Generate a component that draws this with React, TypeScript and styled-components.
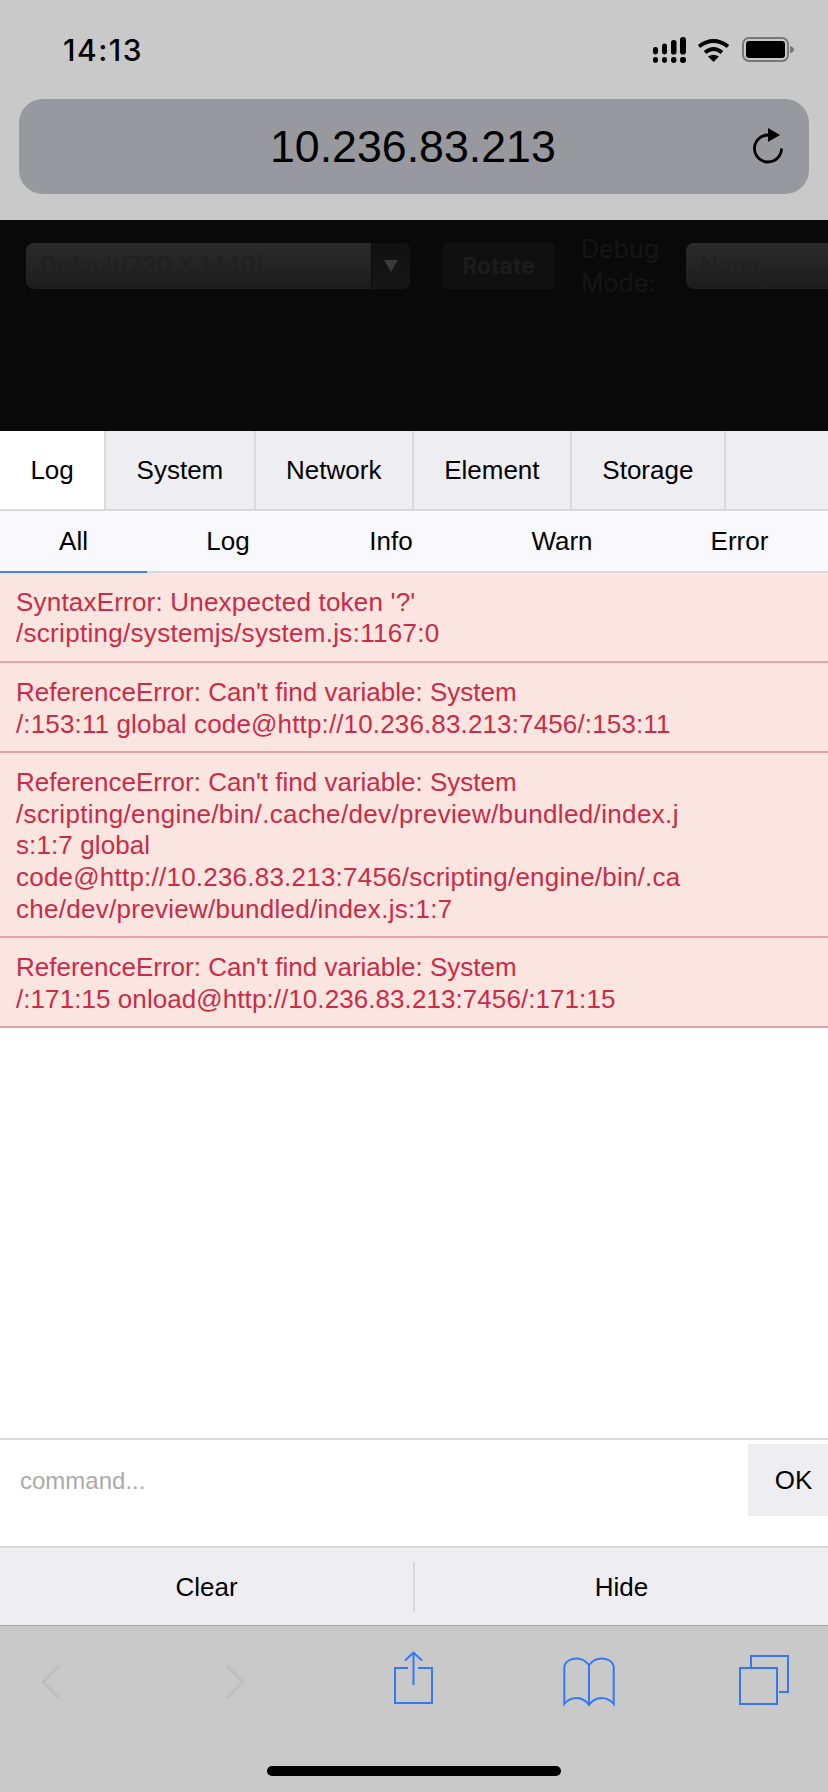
import React from 'react';
import styled, { createGlobalStyle } from 'styled-components';

const GlobalStyle = createGlobalStyle`
  html, body {
    margin: 0;
    padding: 0;
    background: #c9c9c9;
  }
  * {
    box-sizing: border-box;
  }
`;

const Page = styled.div`
  width: 828px;
  height: 1792px;
  display: flex;
  flex-direction: column;
  overflow: hidden;
  font-family: 'Liberation Sans', Arial, sans-serif;
  font-size: 26px;
  color: #000;
  background: #fff;
`;

const BrowserTop = styled.header`
  height: 220px;
  flex: none;
  background: #c9c9c9;
  padding: 0 19px;
`;

const StatusBar = styled.div`
  height: 99px;
  display: flex;
  align-items: center;
  padding: 0 15px 0 44px;
`;

const Clock = styled.span`
  font-family: Inter, 'Liberation Sans', sans-serif;
  font-size: 30px;
  font-weight: 500;
  margin-right: auto;
  letter-spacing: 1.5px;
`;

const StatusIcon = styled.svg<{ $gap?: number }>`
  display: block;
  flex: none;
  margin-left: ${(p) => p.$gap ?? 0}px;
`;

const UrlBar = styled.div`
  height: 95px;
  border-radius: 24px;
  background: #98999e;
  display: flex;
  align-items: center;
  padding: 0 26px 0 251px;
`;

const UrlText = styled.span`
  font-size: 44.7px;
  margin-right: auto;
`;

const ReloadIcon = styled.svg`
  display: block;
  flex: none;
  margin-top: -2px;
`;

const DimmedPage = styled.section`
  height: 211px;
  flex: none;
  background: #090909;
  display: flex;
  align-items: center;
  padding: 0 0 119px 26px;
  overflow: hidden;
  font-family: Inter, 'Liberation Sans', sans-serif;
`;

const DimSelect = styled.div<{ $width: number; $gap?: number }>`
  width: ${(p) => p.$width}px;
  height: 46px;
  flex: none;
  margin-left: ${(p) => p.$gap ?? 0}px;
  display: flex;
  border-radius: 8px;
  overflow: hidden;
  background: linear-gradient(#2b2b2b, #1c1c1c);
`;

const DimSelectText = styled.span`
  flex: 1;
  font-size: 23.6px;
  line-height: 46px;
  padding-left: 14px;
  white-space: nowrap;
  color: #202020;
`;

const DimSelectArrow = styled.span`
  width: 39px;
  flex: none;
  display: flex;
  align-items: center;
  justify-content: center;
  background: linear-gradient(#111, #161616);
  border-left: 1px solid #0b0b0b;
  &::after {
    content: '';
    width: 0;
    height: 0;
    border-left: 7px solid transparent;
    border-right: 7px solid transparent;
    border-top: 12px solid #3a3a3a;
  }
`;

const DimButton = styled.div`
  width: 111px;
  height: 46px;
  flex: none;
  margin-left: 33px;
  background: #101010;
  border-radius: 2px;
  font-size: 23px;
  font-weight: 700;
  line-height: 46px;
  text-align: center;
  color: #1c1c1c;
`;

const DimLabel = styled.div`
  width: 78px;
  flex: none;
  margin-left: 27px;
  font-size: 25px;
  line-height: 34px;
  color: #151515;
`;

const TabBar = styled.nav`
  height: 80px;
  flex: none;
  display: flex;
  background: #eeeef2;
  border-bottom: 2px solid #d9d9d9;
`;

const Tab = styled.div<{ $active?: boolean }>`
  padding: 0 30.4px;
  line-height: 78px;
  border-right: 2px solid #d9d9d9;
  background: ${(p) => (p.$active ? '#fff' : 'transparent')};
`;

const FilterBar = styled.nav`
  height: 62px;
  flex: none;
  display: flex;
  background: #f8f8fd;
  border-bottom: 2px solid #d9d9d9;
`;

const Filter = styled.div<{ $width: number; $active?: boolean }>`
  width: ${(p) => p.$width}px;
  flex: none;
  height: 62px;
  text-align: center;
  line-height: 60px;
  border-bottom: 2px solid ${(p) => (p.$active ? '#4c82f0' : 'transparent')};
`;

const LogList = styled.main`
  flex: 1;
  min-height: 0;
  background: #fff;
`;

const LogRow = styled.div`
  padding: 13.8px 16px 10.9px;
  line-height: 31.67px;
  color: #cb2b47;
  background: #fae5e0;
  border-bottom: 2px solid #e6a2a8;
`;

const LogLine = styled.div<{ $track: number }>`
  letter-spacing: ${(p) => p.$track}px;
  white-space: nowrap;
`;

const CommandBar = styled.form`
  height: 110px;
  flex: none;
  display: flex;
  align-items: flex-start;
  margin: 0;
  padding-top: 4px;
  background: #fff;
  border-top: 2px solid #d9d9d9;
  border-bottom: 2px solid #d9d9d9;
`;

const CommandInput = styled.input`
  flex: 1;
  min-width: 0;
  height: 74px;
  padding: 0 0 0 20px;
  border: 0;
  outline: 0;
  background: transparent;
  font-family: inherit;
  font-size: 24px;
  &::placeholder {
    color: #aaaaaa;
    opacity: 1;
  }
`;

const OkButton = styled.button`
  width: 80px;
  height: 72px;
  flex: none;
  padding: 0 0 0 11px;
  border: 0;
  background: #eeeef2;
  color: #000;
  font: inherit;
`;

const ActionBar = styled.div`
  height: 77px;
  flex: none;
  display: flex;
  align-items: center;
  background: #eeeef2;
`;

const ActionButton = styled.div`
  flex: 1;
  text-align: center;
  padding-top: 1px;
`;

const ActionDivider = styled.span`
  width: 2px;
  height: 50px;
  flex: none;
  background: #d9d9d9;
`;

const BrowserBottom = styled.footer`
  height: 167px;
  flex: none;
  background: #c9c9c9;
  border-top: 1px solid #a8a8a8;
  display: flex;
  flex-direction: column;
`;

const ToolRow = styled.div`
  height: 140px;
  flex: none;
  display: flex;
  align-items: flex-start;
`;

const ToolIcon = styled.svg<{ $left: number; $top: number; $color?: string }>`
  display: block;
  flex: none;
  margin-left: ${(p) => p.$left}px;
  margin-top: ${(p) => p.$top}px;
  fill: none;
  stroke: ${(p) => p.$color ?? '#3478f6'};
  stroke-width: 2;
`;

const HomeBar = styled.div`
  width: 294px;
  height: 10px;
  flex: none;
  margin: 0 auto;
  border-radius: 5px;
  background: #000;
`;

const tabs = ['Log', 'System', 'Network', 'Element', 'Storage'];

const filters = [
  { label: 'All', width: 147 },
  { label: 'Log', width: 162 },
  { label: 'Info', width: 164 },
  { label: 'Warn', width: 178 },
  { label: 'Error', width: 177 },
];

// track = letter spacing per line, the device's text runs a bit wider than Liberation Sans
const refError = { text: "ReferenceError: Can't find variable: System", track: 0 };

const logs = [
  [
    { text: "SyntaxError: Unexpected token '?'", track: 0.2 },
    { text: '/scripting/systemjs/system.js:1167:0', track: 0.3 },
  ],
  [refError, { text: '/:153:11 global code@http://10.236.83.213:7456/:153:11', track: 0.14 }],
  [
    refError,
    { text: '/scripting/engine/bin/.cache/dev/preview/bundled/index.j', track: 0.35 },
    { text: 's:1:7 global', track: 0.1 },
    { text: 'code@http://10.236.83.213:7456/scripting/engine/bin/.ca', track: 0.22 },
    { text: 'che/dev/preview/bundled/index.js:1:7', track: 0.28 },
  ],
  [refError, { text: '/:171:15 onload@http://10.236.83.213:7456/:171:15', track: 0.07 }],
];

const SignalIcon = () => (
  <StatusIcon width="33" height="26" viewBox="0 0 33 26">
    <rect x="0" y="10" width="5" height="7.5" rx="2.4" />
    <rect x="9" y="6.5" width="5" height="11" rx="2.4" />
    <rect x="18" y="3" width="5.5" height="14.5" rx="2.6" />
    <rect x="27" y="0" width="6" height="17.5" rx="2.8" />
    <rect x="0" y="20" width="5" height="6" rx="2.4" />
    <rect x="9" y="20" width="5" height="6" rx="2.4" />
    <rect x="18" y="20" width="5.5" height="6" rx="2.4" />
    <rect x="27" y="20" width="6" height="6" rx="2.4" />
  </StatusIcon>
);

const WifiIcon = () => (
  <StatusIcon $gap={11} width="33" height="24" viewBox="0 0 33 24">
    <path d="M2 8.5 Q16.5 -2.5 31 8.5" fill="none" stroke="#000" strokeWidth="4" />
    <path d="M8 14.5 Q16.5 7.5 25 14.5" fill="none" stroke="#000" strokeWidth="3.8" />
    <path d="M11 18.5 Q16.5 15 22 18.5 L16.5 24 Z" />
  </StatusIcon>
);

const BatteryIcon = () => (
  <StatusIcon $gap={12} width="52" height="25" viewBox="0 0 52 25">
    <rect x="1" y="1" width="45" height="23" rx="6" fill="none" stroke="#777" strokeWidth="2" />
    <rect x="4" y="4" width="39" height="17" rx="3" />
    <path d="M48 9 C50.5 9.5 52 11 52 12.5 C52 14 50.5 15.5 48 16 Z" fill="#777" />
  </StatusIcon>
);

const App: React.FC = () => {
  return (
    <Page>
      <GlobalStyle />
      <BrowserTop>
        <StatusBar>
          <Clock>14:13</Clock>
          <SignalIcon />
          <WifiIcon />
          <BatteryIcon />
        </StatusBar>
        <UrlBar>
          <UrlText>10.236.83.213</UrlText>
          <ReloadIcon width="30" height="36" viewBox="0 0 30 36">
            <path d="M15 7 A13.5 13.5 0 1 0 28.5 20.5" fill="none" stroke="#000" strokeWidth="2.8" />
            <path d="M15 0 L27 7 L15 14 Z" />
          </ReloadIcon>
        </UrlBar>
      </BrowserTop>

      <DimmedPage>
        <DimSelect $width={384}>
          <DimSelectText>Default(720 X 1440)</DimSelectText>
          <DimSelectArrow />
        </DimSelect>
        <DimButton>Rotate</DimButton>
        <DimLabel>Debug Mode:</DimLabel>
        <DimSelect $width={200} $gap={27}>
          <DimSelectText>None</DimSelectText>
        </DimSelect>
      </DimmedPage>

      <TabBar>
        {tabs.map((tab, i) => (
          <Tab key={tab} $active={i === 0}>
            {tab}
          </Tab>
        ))}
      </TabBar>

      <FilterBar>
        {filters.map((filter, i) => (
          <Filter key={filter.label + i} $width={filter.width} $active={i === 0}>
            {filter.label}
          </Filter>
        ))}
      </FilterBar>

      <LogList>
        {logs.map((lines, i) => (
          <LogRow key={i}>
            {lines.map((line, j) => (
              <LogLine key={j} $track={line.track}>
                {line.text}
              </LogLine>
            ))}
          </LogRow>
        ))}
      </LogList>

      <CommandBar>
        <CommandInput placeholder="command..." readOnly />
        <OkButton type="button">OK</OkButton>
      </CommandBar>

      <ActionBar>
        <ActionButton>Clear</ActionButton>
        <ActionDivider />
        <ActionButton>Hide</ActionButton>
      </ActionBar>

      <BrowserBottom>
        <ToolRow>
          <ToolIcon $left={41} $top={38} $color="#bdbdbd" width="20" height="36" viewBox="0 0 20 36">
            <path d="M18.5 1.5 L2 18 L18.5 34.5" strokeWidth="2.5" />
          </ToolIcon>
          <ToolIcon $left={164} $top={38} $color="#bdbdbd" width="20" height="36" viewBox="0 0 20 36">
            <path d="M1.5 1.5 L18 18 L1.5 34.5" strokeWidth="2.5" />
          </ToolIcon>
          <ToolIcon $left={148} $top={25} width="40" height="54" viewBox="0 0 40 54">
            <path d="M15 17 H2 V52 H39 V17 H25" />
            <path d="M20.5 1.5 V34 M12 9.5 L20.5 1.5 L29 9.5" />
          </ToolIcon>
          <ToolIcon $left={130} $top={31} width="52" height="50" viewBox="0 0 52 50">
            <path d="M26 8 C22 3 17 1.5 13.7 1.5 C8 1.5 2 4 1.3 10 V47 C6 41 18 37 26 48 C34 37 46 41 50.7 47 V10 C50 4 44 1.5 38.3 1.5 C35 1.5 30 3 26 8 V48" />
          </ToolIcon>
          <ToolIcon $left={123} $top={28} width="52" height="52" viewBox="0 0 52 52">
            <rect x="2" y="14" width="37" height="36" />
            <path d="M13 13 V2 H50 V38 H41" />
          </ToolIcon>
        </ToolRow>
        <HomeBar />
      </BrowserBottom>
    </Page>
  );
};

export default App;
